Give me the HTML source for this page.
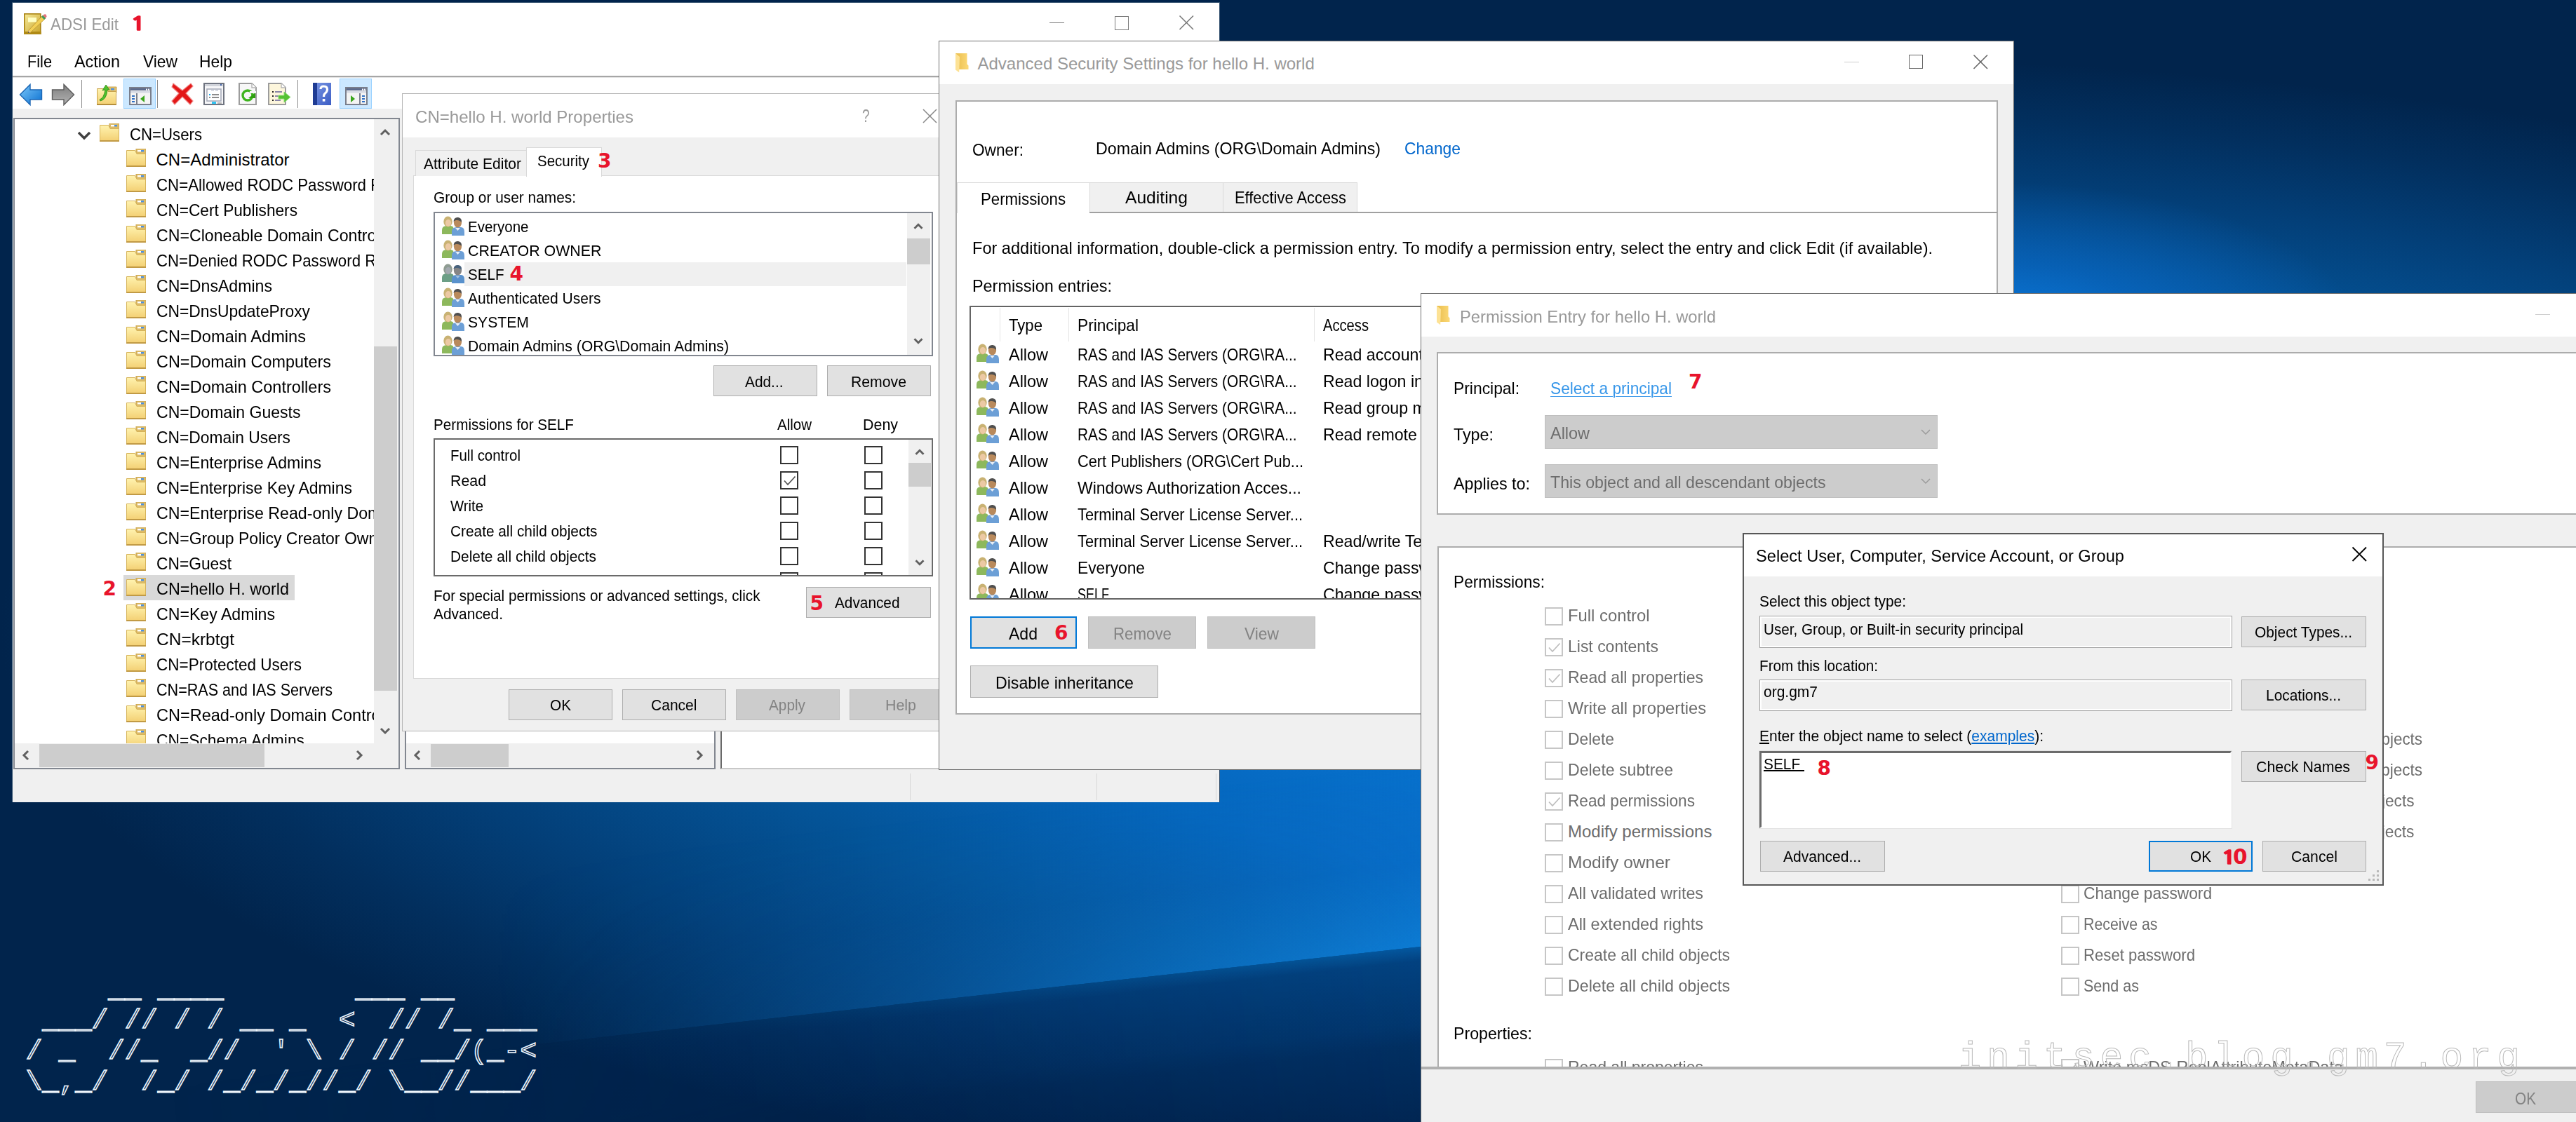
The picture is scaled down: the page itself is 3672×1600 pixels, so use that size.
<!DOCTYPE html>
<html><head><meta charset="utf-8"><title>ADSI Edit</title><style>
html,body{margin:0;padding:0;background:#021b3a}
body{width:3672px;height:1600px;position:relative;overflow:hidden;font-family:"Liberation Sans",sans-serif}
.b{position:absolute;box-sizing:border-box}
.c{position:absolute;left:0;top:0;width:3672px;height:1600px}
.t{position:absolute;line-height:1;white-space:pre;transform-origin:0 0}
.sg,.ar{font-family:"Liberation Sans",sans-serif}
.mono{font-family:"Liberation Mono",monospace}
.dj{font-family:"DejaVu Sans","Liberation Sans",sans-serif}
.nt{font-family:"NanumGothic","DejaVu Sans",sans-serif}
.bd{font-weight:bold}
svg{position:absolute;overflow:visible}
#bg{background:
 radial-gradient(ellipse 520px 210px at 2840px 470px,rgba(12,122,222,.95) 0,rgba(10,110,210,.55) 45%,rgba(10,100,200,0) 100%),
 radial-gradient(ellipse 2500px 820px at 2500px 900px,#0a80e0 0,#0874d2 25%,#0566bc 45%,#045498 62%,#033f78 78%,#022f5e 90%,#01244c 100%)}
#beamd{left:225px;top:1350px;width:2400px;height:800px;transform-origin:1800px 0;transform:rotate(-6.3deg);
 background:linear-gradient(to bottom,rgba(0,30,80,0) 0,rgba(0,30,80,.36) 20px,rgba(0,28,74,.4) 110px,rgba(0,26,68,.5) 140px,rgba(0,24,62,.5) 100%);
 -webkit-mask-image:linear-gradient(to right,transparent 0,rgba(0,0,0,.5) 35%,#000 75%);mask-image:linear-gradient(to right,transparent 0,rgba(0,0,0,.5) 35%,#000 75%)}
#beamu{left:225px;top:1090px;width:2400px;height:260px;transform-origin:1800px 260px;transform:rotate(-6.3deg);
 background:linear-gradient(to top,rgba(20,150,250,.6) 0,rgba(16,130,235,.25) 45%,rgba(16,130,235,0) 100%);
 -webkit-mask-image:linear-gradient(to right,transparent 20%,rgba(0,0,0,.35) 45%,#000 78%);mask-image:linear-gradient(to right,transparent 20%,rgba(0,0,0,.35) 45%,#000 78%)}
</style></head><body>
<svg width="0" height="0" style="position:absolute">
<defs>
<linearGradient id="gFold" x1="0" y1="0" x2="0" y2="1"><stop offset="0" stop-color="#fff3b0"/><stop offset="1" stop-color="#f3cf72"/></linearGradient>
<linearGradient id="gFoldB" x1="0" y1="0" x2="1" y2="0"><stop offset="0" stop-color="#e9bd4c"/><stop offset="1" stop-color="#fcd977"/></linearGradient>
<linearGradient id="gBack" x1="0" y1="0" x2="1" y2="1"><stop offset="0" stop-color="#7cc8fa"/><stop offset="1" stop-color="#0a6fd0"/></linearGradient>
<linearGradient id="gFwd" x1="0" y1="0" x2="0" y2="1"><stop offset="0" stop-color="#7d7d7d"/><stop offset="1" stop-color="#b4b4b4"/></linearGradient>
<linearGradient id="gNote" x1="0" y1="0" x2="1" y2="1"><stop offset="0" stop-color="#f6ea9a"/><stop offset="1" stop-color="#c9a42a"/></linearGradient>
<linearGradient id="gHelp" x1="0" y1="0" x2="1" y2="1"><stop offset="0" stop-color="#7c98e4"/><stop offset="1" stop-color="#3a5cc4"/></linearGradient>
<symbol id="folder" viewBox="0 0 28 26">
 <path d="M14 0H28V10H14Z" fill="#dcbb68" stroke="#c9a34e" stroke-width="1"/>
 <rect x="16" y="2" width="5" height="2.4" fill="#fff"/><rect x="21" y="2" width="4" height="2.4" fill="#4a90e2"/>
 <path d="M0.5 2.5H12.5L15 7.5H27.5V25.5H0.5Z" fill="url(#gFold)" stroke="#d6b35a" stroke-width="1"/>
 <rect x="0" y="24" width="28" height="2" fill="#c19a45"/>
</symbol>
<symbol id="users" viewBox="0 0 32 28">
 <path d="M0 26V20Q0 14 7 14H12Q17 14 17 20V26Z" fill="#8db85c"/>
 <ellipse cx="8.5" cy="8" rx="6.2" ry="7.5" fill="#c9b273"/>
 <ellipse cx="9" cy="10" rx="4.2" ry="5" fill="#ecc9a4"/>
 <path d="M14 28V22Q14 16 21 16H27Q32 16 32 23V28Z" fill="#6c9fd6"/>
 <ellipse cx="22.5" cy="9.5" rx="5.6" ry="7" fill="#b98a5c"/>
 <path d="M16.5 8Q17 1.5 23 2Q28.5 2.5 28 9Q25 5.5 20 6Q18 6.5 16.5 8Z" fill="#4f4f4f"/>
 <path d="M19 17L22.5 21L26 17Z" fill="#e8eef6"/>
</symbol>
<symbol id="userssil" viewBox="0 0 32 28">
 <path d="M0 26V20Q0 14 7 14H12Q17 14 17 20V26Z"/>
 <ellipse cx="8.5" cy="8" rx="6.2" ry="7.5"/>
 <path d="M14 28V22Q14 16 21 16H27Q32 16 32 23V28Z"/>
 <ellipse cx="22.5" cy="9.5" rx="5.6" ry="7"/>
 <path d="M16.5 8Q17 1.5 23 2Q28.5 2.5 28 9Q25 5.5 20 6Q18 6.5 16.5 8Z"/>
</symbol>
<symbol id="tfolder" viewBox="0 0 20 28">
 <path d="M0 0H16.5V15.5L18.5 17.5V23H4Z" fill="url(#gFoldB)"/>
 <path d="M0 0L6 5L5.2 27.2L0 23.5Z" fill="#fde295"/>
</symbol>
<symbol id="chk" viewBox="0 0 25 25">
 <path d="M5 12.5L10 18L20.5 6.5" fill="none" stroke-width="1.8"/>
</symbol>
</defs></svg>
<div class="b" id="bg" style="left:0;top:0;width:3672px;height:1600px"></div><div class="b" id="beamd"></div><div class="b" id="beamu"></div>
<span class="t mono" style="left:36.8px;top:1391.5px;font-size:39.15px;color:#0a2a52;-webkit-text-stroke:1.55px #edf4fb;letter-spacing:0;">     __ ____        ___ __</span>
<span class="t mono" style="left:36.8px;top:1435.7px;font-size:39.15px;color:#0a2a52;-webkit-text-stroke:1.55px #edf4fb;letter-spacing:0;"> ___/ // / / __ _  &lt;  // /_ ___</span>
<span class="t mono" style="left:36.8px;top:1479.9px;font-size:39.15px;color:#0a2a52;-webkit-text-stroke:1.55px #edf4fb;letter-spacing:0;">/ _  //_  _//  ' \ / // __/(_-&lt;</span>
<span class="t mono" style="left:36.8px;top:1524.1px;font-size:39.15px;color:#0a2a52;-webkit-text-stroke:1.55px #edf4fb;letter-spacing:0;">\_,_/  /_/ /_/_/_//_/ \__//___/</span>
<div class="c" style="clip-path:inset(3px 1933px 456px 17px);">
<div class="b" style="left:17px;top:3px;width:1722px;height:1141px;background:#fff;border:1px solid #32506e;"></div>
<svg style="left:34px;top:18.5px;" width="33" height="30" viewBox="0 0 33 30"><rect x="0.8" y="0.8" width="23" height="28.4" fill="url(#gNote)" stroke="#a8820f" stroke-width="1.6"/><rect x="0" y="26" width="24.6" height="4" fill="#b08a14"/><rect x="6" y="6" width="12" height="6.5" fill="#ffffc4"/><path d="M27 3L31 7L10 27L6 28L7 24Z" fill="#f2cf55" stroke="#b8902c" stroke-width="0.8"/><path d="M27 3L29 1.5Q31 0.5 32 2.5L32.5 4.5L31 7Z" fill="#e2737c"/><path d="M25 5L27 3L31 7L29 9Z" fill="#3f9a5e"/><path d="M6 28L7 24L10 27Z" fill="#e9c7a0"/><path d="M6 28L6.5 26L8 27.5Z" fill="#333"/></svg>
<span class="t sg" style="left:71.5px;top:22.7px;font-size:24px;color:#999;transform:scaleX(0.9323);">ADSI Edit</span>
<span class="t nt bd" style="left:185.5px;top:20.5px;font-size:26.5px;color:#e8142c;transform:scaleX(1.3500);-webkit-text-stroke:1.4px #e8142c;">1</span>
<div class="b" style="left:1496px;top:31.5px;width:21px;height:1.6px;background:#7a7a7a;"></div>
<div class="b" style="left:1588.5px;top:23px;width:20px;height:20px;border:1.6px solid #7a7a7a;"></div>
<svg style="left:0;top:0" width="1" height="1"><path d="M1681.5 22.5L1701 42M1701 22.5L1681.5 42" stroke="#7a7a7a" stroke-width="1.6" fill="none"/></svg>
<span class="t sg" style="left:39px;top:75.7px;font-size:24px;color:#000;transform:scaleX(0.9051);">File</span>
<span class="t sg" style="left:106px;top:75.7px;font-size:24px;color:#000;transform:scaleX(0.9745);">Action</span>
<span class="t sg" style="left:204px;top:75.7px;font-size:24px;color:#000;transform:scaleX(0.9497);">View</span>
<span class="t sg" style="left:284px;top:75.7px;font-size:24px;color:#000;transform:scaleX(0.9522);">Help</span>
<div class="b" style="left:18px;top:108px;width:1720px;height:2px;background:#a6a6a6;"></div>
<div class="b" style="left:18px;top:110px;width:1720px;height:1px;background:#e4e4e4;"></div>
<div class="b" style="left:176px;top:112px;width:46px;height:43px;background:#cce8ff;border:1px solid #99d1ff;"></div>
<div class="b" style="left:484px;top:112px;width:46px;height:43px;background:#cce8ff;border:1px solid #99d1ff;"></div>
<div class="b" style="left:115.5px;top:114px;width:1.4px;height:40px;background:#8d8d8d;"></div>
<div class="b" style="left:223.5px;top:114px;width:1.4px;height:40px;background:#8d8d8d;"></div>
<div class="b" style="left:423.5px;top:114px;width:1.4px;height:40px;background:#8d8d8d;"></div>
<svg style="left:28px;top:120px;" width="32" height="30" viewBox="0 0 32 30"><path d="M0.5 15L15 0.5V8H31.5V22H15V29.5Z" fill="url(#gBack)" stroke="#1b66b4" stroke-width="1.4"/></svg>
<svg style="left:74px;top:120px;" width="32" height="30" viewBox="0 0 32 30"><path d="M31.5 15L17 0.5V8H0.5V22H17V29.5Z" fill="url(#gFwd)" stroke="#5c5c5c" stroke-width="1.4"/></svg>
<svg style="left:138px;top:120px;" width="28" height="30" viewBox="0 0 28 30"><path d="M15 4H28V12H15Z" fill="#e2c06c" stroke="#c9a34e"/><rect x="20" y="6" width="5" height="2.4" fill="#4a90e2"/><path d="M0.5 6.5H13L16 10.5H27.5V29.5H0.5Z" fill="url(#gFold)" stroke="#c9a34e"/><rect x="0" y="28" width="28" height="2" fill="#b58f3c"/><path d="M4 22Q10 20 12 8L8 9L13 1L18 8L15 8Q14 22 5 24Z" fill="#4fc02c" stroke="#2e8a14" stroke-width="0.8"/></svg>
<svg style="left:184px;top:124px;" width="32" height="26" viewBox="0 0 32 26"><rect x="1" y="1" width="30" height="24" fill="#f4f4f4" stroke="#7a7f8c" stroke-width="2"/><rect x="2" y="2" width="28" height="3" fill="#5d6b8c"/><rect x="2" y="6" width="28" height="2.5" fill="#d5d9e4"/><rect x="24" y="2.6" width="2" height="2" fill="#fff"/><rect x="27" y="2.6" width="2" height="2" fill="#fff"/><rect x="10" y="9" width="2" height="15" fill="#7a7f8c"/><rect x="4" y="12" width="4" height="2" fill="#2e6fc4"/><rect x="4" y="16" width="4" height="2" fill="#2e6fc4"/><rect x="4" y="20" width="4" height="2" fill="#2e6fc4"/><path d="M22 12V22L16 17Z" fill="#3aa51c"/></svg>
<svg style="left:244px;top:118px;" width="32" height="32" viewBox="0 0 32 32"><path d="M3 1L16 11L28 1L31 5L21 15L31 26L27 31L16 20L5 31L1 26L11 15L1 6Z" fill="#e31818" stroke="#f08a8a" stroke-width="1.2"/></svg>
<svg style="left:290px;top:118px;" width="30" height="32" viewBox="0 0 30 32"><rect x="1" y="1" width="28" height="30" fill="#f6f6f8" stroke="#6f7480" stroke-width="2"/><rect x="2" y="2" width="26" height="3" fill="#d0d3da"/><rect x="24" y="2" width="2" height="2" fill="#4466aa"/><rect x="5" y="9" width="20" height="17" fill="#fff" stroke="#a8adbb" stroke-width="1.6"/><rect x="11" y="10" width="4" height="2" fill="#d8dbe4"/><rect x="17" y="10" width="4" height="2" fill="#d8dbe4"/><rect x="8" y="16" width="2" height="2" fill="#1aa8ee"/><rect x="12" y="16" width="10" height="2" fill="#8c8c8c"/><rect x="8" y="20" width="2" height="2" fill="#8c8c8c"/><rect x="12" y="20" width="10" height="2" fill="#8c8c8c"/><rect x="12" y="27" width="6" height="3" fill="#2ec4f4"/><rect x="20" y="28" width="6" height="2" fill="#b4b4b4"/></svg>
<svg style="left:340px;top:118px;" width="26" height="32" viewBox="0 0 26 32"><path d="M1 1H19L25 7V31H1Z" fill="#f7f7f7" stroke="#9c9c9c" stroke-width="2"/><path d="M19 1V7H25" fill="#fff" stroke="#b5b5b5" stroke-width="1.4"/><circle cx="13" cy="18" r="7" fill="none" stroke="#3fb41f" stroke-width="3.4"/><path d="M14 22H24V14Z" fill="#2fa010"/><rect x="16" y="12" width="9" height="3" fill="#f7f7f7"/></svg>
<svg style="left:382px;top:118px;" width="33" height="32" viewBox="0 0 33 32"><path d="M1 1H19L25 7V31H1Z" fill="#fdf6dc" stroke="#9c9c9c" stroke-width="2"/><path d="M19 1V7H25" fill="#fff" stroke="#b5b5b5" stroke-width="1.4"/><rect x="6" y="12" width="2" height="2" fill="#222"/><rect x="10" y="12" width="10" height="2" fill="#8a86a8"/><rect x="6" y="18" width="2" height="2" fill="#222"/><rect x="10" y="18" width="6" height="2" fill="#8a86a8"/><rect x="6" y="24" width="2" height="2" fill="#222"/><rect x="10" y="24" width="8" height="2" fill="#8a86a8"/><path d="M15 18H23V13L32 20.5L23 28V23H15Z" fill="#55c233" stroke="#8edb74" stroke-width="1"/></svg>
<svg style="left:446px;top:118px;" width="26" height="32" viewBox="0 0 26 32"><rect x="0" y="0" width="26" height="32" fill="url(#gHelp)"/><rect x="0" y="0" width="6" height="32" fill="#1f3c94"/><path d="M11 9Q11 5 15.5 5Q20.5 5 20.5 9.5Q20.5 12.5 17.5 15Q15.5 16.5 15.5 20" fill="none" stroke="#fff" stroke-width="3.2"/><rect x="13.8" y="23" width="3.6" height="3.6" fill="#fff"/></svg>
<svg style="left:492px;top:124px;" width="32" height="26" viewBox="0 0 32 26"><rect x="1" y="1" width="30" height="24" fill="#f4f4f4" stroke="#7a7f8c" stroke-width="2"/><rect x="2" y="2" width="28" height="3" fill="#5d6b8c"/><rect x="2" y="6" width="28" height="2.5" fill="#d5d9e4"/><rect x="24" y="2.6" width="2" height="2" fill="#fff"/><rect x="27" y="2.6" width="2" height="2" fill="#fff"/><rect x="20" y="9" width="2" height="15" fill="#7a7f8c"/><rect x="24" y="12" width="4" height="2" fill="#2e6fc4"/><rect x="24" y="16" width="4" height="2" fill="#2e6fc4"/><rect x="24" y="20" width="4" height="2" fill="#2e6fc4"/><path d="M8 12V22L14 17Z" fill="#3aa51c"/></svg>
<div class="b" style="left:18px;top:155px;width:1720px;height:990px;background:#f0f0f0;"></div>
<div class="b" style="left:19px;top:168px;width:551px;height:929px;background:#fff;border:2px solid #828790;"></div>
<div class="c" style="clip-path:inset(170px 3139px 540px 21px);">
<div class="b" style="left:176px;top:820px;width:244px;height:36px;background:#d9d9d9;"></div>
<svg style="left:0;top:0" width="1" height="1"><polyline points="112,189.0 120,197.0 128,189.0" fill="none" stroke="#404040" stroke-width="3.4"/></svg>
<svg style="left:142px;top:176px;" width="28" height="26"><use href="#folder"/></svg>
<span class="t sg" style="left:184.5px;top:180.2px;font-size:24px;color:#000;transform:scaleX(0.9249);">CN=Users</span>
<svg style="left:180px;top:212px;" width="28" height="26"><use href="#folder"/></svg>
<span class="t sg" style="left:222.5px;top:216.2px;font-size:24px;color:#000;">CN=Administrator</span>
<svg style="left:180px;top:248px;" width="28" height="26"><use href="#folder"/></svg>
<span class="t sg" style="left:222.5px;top:252.2px;font-size:24px;color:#000;transform:scaleX(0.9283);">CN=Allowed RODC Password Replication Group</span>
<svg style="left:180px;top:284px;" width="28" height="26"><use href="#folder"/></svg>
<span class="t sg" style="left:222.5px;top:288.2px;font-size:24px;color:#000;transform:scaleX(0.9448);">CN=Cert Publishers</span>
<svg style="left:180px;top:320px;" width="28" height="26"><use href="#folder"/></svg>
<span class="t sg" style="left:222.5px;top:324.2px;font-size:24px;color:#000;transform:scaleX(0.9649);">CN=Cloneable Domain Controllers</span>
<svg style="left:180px;top:356px;" width="28" height="26"><use href="#folder"/></svg>
<span class="t sg" style="left:222.5px;top:360.2px;font-size:24px;color:#000;transform:scaleX(0.9264);">CN=Denied RODC Password Replication Group</span>
<svg style="left:180px;top:392px;" width="28" height="26"><use href="#folder"/></svg>
<span class="t sg" style="left:222.5px;top:396.2px;font-size:24px;color:#000;transform:scaleX(0.9627);">CN=DnsAdmins</span>
<svg style="left:180px;top:428px;" width="28" height="26"><use href="#folder"/></svg>
<span class="t sg" style="left:222.5px;top:432.2px;font-size:24px;color:#000;transform:scaleX(0.9517);">CN=DnsUpdateProxy</span>
<svg style="left:180px;top:464px;" width="28" height="26"><use href="#folder"/></svg>
<span class="t sg" style="left:222.5px;top:468.2px;font-size:24px;color:#000;transform:scaleX(0.9827);">CN=Domain Admins</span>
<svg style="left:180px;top:500px;" width="28" height="26"><use href="#folder"/></svg>
<span class="t sg" style="left:222.5px;top:504.2px;font-size:24px;color:#000;transform:scaleX(0.9749);">CN=Domain Computers</span>
<svg style="left:180px;top:536px;" width="28" height="26"><use href="#folder"/></svg>
<span class="t sg" style="left:222.5px;top:540.2px;font-size:24px;color:#000;transform:scaleX(0.9800);">CN=Domain Controllers</span>
<svg style="left:180px;top:572px;" width="28" height="26"><use href="#folder"/></svg>
<span class="t sg" style="left:222.5px;top:576.2px;font-size:24px;color:#000;transform:scaleX(0.9599);">CN=Domain Guests</span>
<svg style="left:180px;top:608px;" width="28" height="26"><use href="#folder"/></svg>
<span class="t sg" style="left:222.5px;top:612.2px;font-size:24px;color:#000;transform:scaleX(0.9516);">CN=Domain Users</span>
<svg style="left:180px;top:644px;" width="28" height="26"><use href="#folder"/></svg>
<span class="t sg" style="left:222.5px;top:648.2px;font-size:24px;color:#000;transform:scaleX(0.9653);">CN=Enterprise Admins</span>
<svg style="left:180px;top:680px;" width="28" height="26"><use href="#folder"/></svg>
<span class="t sg" style="left:222.5px;top:684.2px;font-size:24px;color:#000;transform:scaleX(0.9572);">CN=Enterprise Key Admins</span>
<svg style="left:180px;top:716px;" width="28" height="26"><use href="#folder"/></svg>
<span class="t sg" style="left:222.5px;top:720.2px;font-size:24px;color:#000;transform:scaleX(0.9667);">CN=Enterprise Read-only Domain Controllers</span>
<svg style="left:180px;top:752px;" width="28" height="26"><use href="#folder"/></svg>
<span class="t sg" style="left:222.5px;top:756.2px;font-size:24px;color:#000;transform:scaleX(0.9587);">CN=Group Policy Creator Owners</span>
<svg style="left:180px;top:788px;" width="28" height="26"><use href="#folder"/></svg>
<span class="t sg" style="left:222.5px;top:792.2px;font-size:24px;color:#000;transform:scaleX(0.9493);">CN=Guest</span>
<svg style="left:180px;top:824px;" width="28" height="26"><use href="#folder"/></svg>
<span class="t sg" style="left:222.5px;top:828.2px;font-size:24px;color:#000;transform:scaleX(0.9738);">CN=hello H. world</span>
<svg style="left:180px;top:860px;" width="28" height="26"><use href="#folder"/></svg>
<span class="t sg" style="left:222.5px;top:864.2px;font-size:24px;color:#000;transform:scaleX(0.9635);">CN=Key Admins</span>
<svg style="left:180px;top:896px;" width="28" height="26"><use href="#folder"/></svg>
<span class="t sg" style="left:222.5px;top:900.2px;font-size:24px;color:#000;transform:scaleX(1.0211);">CN=krbtgt</span>
<svg style="left:180px;top:932px;" width="28" height="26"><use href="#folder"/></svg>
<span class="t sg" style="left:222.5px;top:936.2px;font-size:24px;color:#000;transform:scaleX(0.9377);">CN=Protected Users</span>
<svg style="left:180px;top:968px;" width="28" height="26"><use href="#folder"/></svg>
<span class="t sg" style="left:222.5px;top:972.2px;font-size:24px;color:#000;transform:scaleX(0.8982);">CN=RAS and IAS Servers</span>
<svg style="left:180px;top:1004px;" width="28" height="26"><use href="#folder"/></svg>
<span class="t sg" style="left:222.5px;top:1008.2px;font-size:24px;color:#000;transform:scaleX(0.9800);">CN=Read-only Domain Controllers</span>
<svg style="left:180px;top:1040px;" width="28" height="26"><use href="#folder"/></svg>
<span class="t sg" style="left:222.5px;top:1044.2px;font-size:24px;color:#000;transform:scaleX(0.9500);">CN=Schema Admins</span>
<span class="t dj bd" style="left:146.5px;top:826.0px;font-size:28px;color:#e8142c;">2</span>
</div>
<div class="b" style="left:533px;top:170px;width:34px;height:890px;background:#f0f0f0;"></div>
<div class="b" style="left:533px;top:494px;width:33px;height:491px;background:#cdcdcd;"></div>
<svg style="left:0;top:0" width="1" height="1"><polyline points="543,192.0 549,186.0 555,192.0" fill="none" stroke="#606060" stroke-width="3"/></svg>
<svg style="left:0;top:0" width="1" height="1"><polyline points="543,1039.0 549,1045.0 555,1039.0" fill="none" stroke="#606060" stroke-width="3"/></svg>
<div class="b" style="left:21px;top:1060px;width:546px;height:35px;background:#f0f0f0;"></div>
<div class="b" style="left:56px;top:1061px;width:321px;height:33px;background:#cdcdcd;"></div>
<svg style="left:0;top:0" width="1" height="1"><polyline points="40.0,1071 34.0,1077 40.0,1083" fill="none" stroke="#606060" stroke-width="3"/></svg>
<svg style="left:0;top:0" width="1" height="1"><polyline points="509.0,1071 515.0,1077 509.0,1083" fill="none" stroke="#606060" stroke-width="3"/></svg>
<div class="b" style="left:577px;top:168px;width:443px;height:929px;background:#fff;border:2px solid #828790;"></div>
<div class="b" style="left:579px;top:1060px;width:439px;height:35px;background:#f0f0f0;"></div>
<div class="b" style="left:614px;top:1061px;width:111px;height:33px;background:#cdcdcd;"></div>
<svg style="left:0;top:0" width="1" height="1"><polyline points="598.0,1071 592.0,1077 598.0,1083" fill="none" stroke="#606060" stroke-width="3"/></svg>
<svg style="left:0;top:0" width="1" height="1"><polyline points="994.0,1071 1000.0,1077 994.0,1083" fill="none" stroke="#606060" stroke-width="3"/></svg>
<div class="b" style="left:1027px;top:168px;width:720px;height:929px;background:#fff;border:2px solid #c8c8c8;border-left:2.5px solid #696969;border-top:2px solid #828790;"></div>
<div class="b" style="left:1297px;top:1103px;width:1px;height:38px;background:#d7d7d7;"></div>
<div class="b" style="left:1563px;top:1103px;width:1px;height:38px;background:#d7d7d7;"></div>
<div class="b" style="left:1733px;top:1103px;width:1px;height:38px;background:#d7d7d7;"></div>
</div>
<div class="c" style="clip-path:inset(133px 2252px 557px 573px);">
<div class="b" style="left:573px;top:133px;width:860px;height:910px;background:#f0f0f0;border:1px solid #b4b4b4;"></div>
<div class="b" style="left:574px;top:134px;width:858px;height:62px;background:#fff;"></div>
<span class="t sg" style="left:592px;top:154.7px;font-size:24px;color:#999;transform:scaleX(1.0028);">CN=hello H. world Properties</span>
<span class="t sg" style="left:1228.5px;top:152.0px;font-size:26px;color:#999;transform:scaleX(0.7257);">?</span>
<svg style="left:0;top:0" width="1" height="1"><path d="M1316 156L1335 175M1335 156L1316 175" stroke="#8a8a8a" stroke-width="1.6" fill="none"/></svg>
<div class="b" style="left:589px;top:250px;width:850px;height:718px;background:#fff;border:1px solid #d9d9d9;"></div>
<div class="b" style="left:592px;top:214px;width:159px;height:37px;background:#f0f0f0;border:1px solid #d9d9d9;border-bottom:none;"></div>
<div class="b" style="left:750px;top:210px;width:108px;height:42px;background:#fff;border:1px solid #d9d9d9;border-bottom:none;"></div>
<span class="t ar" style="left:604px;top:223.4px;font-size:22px;color:#000;transform:scaleX(0.9552);">Attribute Editor</span>
<span class="t ar" style="left:766px;top:219.4px;font-size:22px;color:#000;transform:scaleX(0.9310);">Security</span>
<span class="t dj bd" style="left:852px;top:215.5px;font-size:28px;color:#e8142c;">3</span>
<span class="t ar" style="left:618px;top:270.9px;font-size:22px;color:#000;transform:scaleX(0.9487);">Group or user names:</span>
<div class="b" style="left:618px;top:302px;width:712px;height:206px;background:#fff;border:2px solid #828790;"></div>
<div class="b" style="left:662px;top:374px;width:630px;height:34px;background:#f0f0f0;"></div>
<svg style="left:630px;top:308px;" width="32" height="28"><use href="#users"/></svg>
<span class="t ar" style="left:666.5px;top:312.9px;font-size:22px;color:#000;transform:scaleX(0.9306);">Everyone</span>
<svg style="left:630px;top:342px;" width="32" height="28"><use href="#users"/></svg>
<span class="t ar" style="left:666.5px;top:346.9px;font-size:22px;color:#000;transform:scaleX(0.9720);">CREATOR OWNER</span>
<svg style="left:630px;top:376px;" width="32" height="28"><use href="#users"/></svg>
<svg style="left:630px;top:376px;fill:#3f7fc0;opacity:.42" width="32" height="28"><use href="#userssil"/></svg>
<span class="t ar" style="left:666.5px;top:380.9px;font-size:22px;color:#000;transform:scaleX(0.9358);">SELF</span>
<svg style="left:630px;top:410px;" width="32" height="28"><use href="#users"/></svg>
<span class="t ar" style="left:666.5px;top:414.9px;font-size:22px;color:#000;transform:scaleX(0.9565);">Authenticated Users</span>
<svg style="left:630px;top:444px;" width="32" height="28"><use href="#users"/></svg>
<span class="t ar" style="left:666.5px;top:448.9px;font-size:22px;color:#000;transform:scaleX(0.9617);">SYSTEM</span>
<svg style="left:630px;top:478px;" width="32" height="28"><use href="#users"/></svg>
<span class="t ar" style="left:666.5px;top:482.9px;font-size:22px;color:#000;transform:scaleX(0.9659);">Domain Admins (ORG\Domain Admins)</span>
<span class="t dj bd" style="left:726.5px;top:377.0px;font-size:28px;color:#e8142c;">4</span>
<div class="b" style="left:1293px;top:304px;width:33px;height:202px;background:#f0f0f0;"></div>
<div class="b" style="left:1293px;top:340px;width:33px;height:37px;background:#cdcdcd;"></div>
<svg style="left:0;top:0" width="1" height="1"><polyline points="1303.5,325.75 1309,320.25 1314.5,325.75" fill="none" stroke="#606060" stroke-width="2.8"/></svg>
<svg style="left:0;top:0" width="1" height="1"><polyline points="1303.5,483.25 1309,488.75 1314.5,483.25" fill="none" stroke="#606060" stroke-width="2.8"/></svg>
<div class="b" style="left:1017px;top:521px;width:148px;height:44px;background:#e1e1e1;border:1px solid #adadad;"></div>
<span class="t ar" style="left:1062px;top:534.4px;font-size:22px;color:#000;transform:scaleX(0.9481);">Add...</span>
<div class="b" style="left:1179px;top:521px;width:148px;height:44px;background:#e1e1e1;border:1px solid #adadad;"></div>
<span class="t ar" style="left:1213px;top:534.4px;font-size:22px;color:#000;transform:scaleX(0.9643);">Remove</span>
<span class="t ar" style="left:618px;top:595.4px;font-size:22px;color:#000;transform:scaleX(0.9401);">Permissions for SELF</span>
<span class="t ar" style="left:1108px;top:595.4px;font-size:22px;color:#000;transform:scaleX(0.9319);">Allow</span>
<span class="t ar" style="left:1230px;top:595.4px;font-size:22px;color:#000;transform:scaleX(0.9735);">Deny</span>
<div class="b" style="left:618px;top:625px;width:712px;height:197px;background:#fff;border:2px solid #6a6a6a;"></div>
<div class="c" style="clip-path:inset(627px 2344px 780px 620px);">
<span class="t ar" style="left:642px;top:639.4px;font-size:22px;color:#000;transform:scaleX(0.9294);">Full control</span>
<div class="b" style="left:1112px;top:636px;width:26px;height:26px;background:#fff;border:2px solid #333;"></div>
<div class="b" style="left:1232px;top:636px;width:26px;height:26px;background:#fff;border:2px solid #333;"></div>
<span class="t ar" style="left:642px;top:675.4px;font-size:22px;color:#000;transform:scaleX(0.9697);">Read</span>
<div class="b" style="left:1112px;top:672px;width:26px;height:26px;background:#fff;border:2px solid #333;"></div>
<svg style="left:1112.5px;top:672.5px;stroke:#555" width="25" height="25"><use href="#chk"/></svg>
<div class="b" style="left:1232px;top:672px;width:26px;height:26px;background:#fff;border:2px solid #333;"></div>
<span class="t ar" style="left:642px;top:711.4px;font-size:22px;color:#000;transform:scaleX(0.9227);">Write</span>
<div class="b" style="left:1112px;top:708px;width:26px;height:26px;background:#fff;border:2px solid #333;"></div>
<div class="b" style="left:1232px;top:708px;width:26px;height:26px;background:#fff;border:2px solid #333;"></div>
<span class="t ar" style="left:642px;top:747.4px;font-size:22px;color:#000;transform:scaleX(0.9465);">Create all child objects</span>
<div class="b" style="left:1112px;top:744px;width:26px;height:26px;background:#fff;border:2px solid #333;"></div>
<div class="b" style="left:1232px;top:744px;width:26px;height:26px;background:#fff;border:2px solid #333;"></div>
<span class="t ar" style="left:642px;top:783.4px;font-size:22px;color:#000;transform:scaleX(0.9502);">Delete all child objects</span>
<div class="b" style="left:1112px;top:780px;width:26px;height:26px;background:#fff;border:2px solid #333;"></div>
<div class="b" style="left:1232px;top:780px;width:26px;height:26px;background:#fff;border:2px solid #333;"></div>
<span class="t ar" style="left:642px;top:819.4px;font-size:22px;color:#000;transform:scaleX(0.9550);">Read all properties</span>
<div class="b" style="left:1112px;top:816px;width:26px;height:26px;background:#fff;border:2px solid #333;"></div>
<div class="b" style="left:1232px;top:816px;width:26px;height:26px;background:#fff;border:2px solid #333;"></div>
<div class="b" style="left:1295px;top:627px;width:32px;height:193px;background:#f0f0f0;"></div>
<div class="b" style="left:1295px;top:660px;width:32px;height:34px;background:#cdcdcd;"></div>
<svg style="left:0;top:0" width="1" height="1"><polyline points="1305.5,647.75 1311,642.25 1316.5,647.75" fill="none" stroke="#606060" stroke-width="2.8"/></svg>
<svg style="left:0;top:0" width="1" height="1"><polyline points="1305.5,799.25 1311,804.75 1316.5,799.25" fill="none" stroke="#606060" stroke-width="2.8"/></svg>
</div>
<span class="t ar" style="left:618px;top:839.4px;font-size:22px;color:#000;transform:scaleX(0.9400);">For special permissions or advanced settings, click</span>
<span class="t ar" style="left:618px;top:865.4px;font-size:22px;color:#000;transform:scaleX(0.9522);">Advanced.</span>
<div class="b" style="left:1149px;top:837px;width:178px;height:44px;background:#e1e1e1;border:1px solid #adadad;"></div>
<span class="t ar" style="left:1190px;top:848.9px;font-size:22px;color:#000;transform:scaleX(0.9452);">Advanced</span>
<span class="t dj bd" style="left:1154.5px;top:847.0px;font-size:28px;color:#e8142c;">5</span>
<div class="b" style="left:725px;top:983px;width:148px;height:44px;background:#e1e1e1;border:1px solid #adadad;"></div>
<span class="t ar" style="left:784px;top:994.9px;font-size:22px;color:#000;transform:scaleX(0.9435);">OK</span>
<div class="b" style="left:887px;top:983px;width:148px;height:44px;background:#e1e1e1;border:1px solid #adadad;"></div>
<span class="t ar" style="left:928px;top:994.9px;font-size:22px;color:#000;transform:scaleX(0.9564);">Cancel</span>
<div class="b" style="left:1049px;top:983px;width:148px;height:44px;background:#cccccc;border:1px solid #bfbfbf;"></div>
<span class="t ar" style="left:1096px;top:994.9px;font-size:22px;color:#838383;transform:scaleX(0.9446);">Apply</span>
<div class="b" style="left:1211px;top:983px;width:148px;height:44px;background:#cccccc;border:1px solid #bfbfbf;"></div>
<span class="t ar" style="left:1262px;top:994.9px;font-size:22px;color:#838383;transform:scaleX(0.9724);">Help</span>
</div>
<div class="c" style="clip-path:inset(58px 801px 502px 1338px);">
<div class="b" style="left:1338px;top:58px;width:1533px;height:1040px;background:#f0f0f0;border:1px solid #6e6e6e;"></div>
<div class="b" style="left:1339px;top:59px;width:1531px;height:61px;background:#fff;"></div>
<svg style="left:1362px;top:76px;" width="20" height="28"><use href="#tfolder"/></svg>
<span class="t sg" style="left:1393.5px;top:79.3px;font-size:24px;color:#999;">Advanced Security Settings for hello H. world</span>
<div class="b" style="left:2629px;top:87.5px;width:21px;height:1.6px;background:#cfcfcf;"></div>
<div class="b" style="left:2720.5px;top:78px;width:20px;height:20px;border:1.6px solid #666;"></div>
<svg style="left:0;top:0" width="1" height="1"><path d="M2813.5 78.5L2833 98M2833 78.5L2813.5 98" stroke="#666" stroke-width="1.6" fill="none"/></svg>
<div class="b" style="left:1362px;top:143px;width:1486px;height:876px;background:#fff;border:2px solid #acacac;"></div>
<span class="t sg" style="left:1386px;top:201.7px;font-size:24px;color:#000;transform:scaleX(0.9436);">Owner:</span>
<span class="t sg" style="left:1562px;top:199.7px;font-size:24px;color:#000;transform:scaleX(0.9663);">Domain Admins (ORG\Domain Admins)</span>
<span class="t sg" style="left:2002px;top:199.7px;font-size:24px;color:#0066cc;transform:scaleX(0.9515);">Change</span>
<div class="b" style="left:1553px;top:302px;width:1294px;height:2px;background:#a0a0a0;"></div>
<div class="b" style="left:1553px;top:260px;width:191px;height:42px;background:#f0f0f0;border:1px solid #d9d9d9;border-bottom:none;"></div>
<div class="b" style="left:1743px;top:260px;width:192px;height:42px;background:#f0f0f0;border:1px solid #d9d9d9;border-bottom:none;"></div>
<div class="b" style="left:1364px;top:260px;width:189px;height:44px;background:#fff;border:1px solid #d9d9d9;border-bottom:none;border-right:none;"></div>
<span class="t sg" style="left:1398px;top:271.7px;font-size:24px;color:#000;transform:scaleX(0.9258);">Permissions</span>
<span class="t sg" style="left:1604px;top:269.7px;font-size:24px;color:#000;transform:scaleX(1.0261);">Auditing</span>
<span class="t sg" style="left:1760px;top:269.7px;font-size:24px;color:#000;transform:scaleX(0.9122);">Effective Access</span>
<span class="t sg" style="left:1386px;top:341.7px;font-size:24px;color:#000;transform:scaleX(0.9812);">For additional information, double-click a permission entry. To modify a permission entry, select the entry and click Edit (if available).</span>
<span class="t sg" style="left:1386px;top:395.7px;font-size:24px;color:#000;transform:scaleX(0.9751);">Permission entries:</span>
<div class="b" style="left:1382px;top:436px;width:1001px;height:419px;background:#fff;border:2px solid #646464;"></div>
<div class="c" style="clip-path:inset(439px 1272px 747px 1385px);">
<div class="b" style="left:1425px;top:439px;width:1px;height:48px;background:#e5e5e5;"></div>
<div class="b" style="left:1523px;top:439px;width:1px;height:48px;background:#e5e5e5;"></div>
<div class="b" style="left:1873px;top:439px;width:1px;height:48px;background:#e5e5e5;"></div>
<span class="t sg" style="left:1438px;top:451.7px;font-size:24px;color:#000;transform:scaleX(0.9225);">Type</span>
<span class="t sg" style="left:1536px;top:451.7px;font-size:24px;color:#000;transform:scaleX(0.9452);">Principal</span>
<span class="t sg" style="left:1886px;top:451.7px;font-size:24px;color:#000;transform:scaleX(0.8402);">Access</span>
<svg style="left:1392px;top:490px;" width="32" height="28"><use href="#users"/></svg>
<span class="t sg" style="left:1438px;top:493.7px;font-size:24px;color:#000;transform:scaleX(0.9763);">Allow</span>
<span class="t sg" style="left:1536px;top:493.7px;font-size:24px;color:#000;transform:scaleX(0.8678);">RAS and IAS Servers (ORG\RA...</span>
<span class="t sg" style="left:1886px;top:493.7px;font-size:24px;color:#000;transform:scaleX(0.9650);">Read account restrictions</span>
<svg style="left:1392px;top:528px;" width="32" height="28"><use href="#users"/></svg>
<span class="t sg" style="left:1438px;top:531.7px;font-size:24px;color:#000;transform:scaleX(0.9763);">Allow</span>
<span class="t sg" style="left:1536px;top:531.7px;font-size:24px;color:#000;transform:scaleX(0.8678);">RAS and IAS Servers (ORG\RA...</span>
<span class="t sg" style="left:1886px;top:531.7px;font-size:24px;color:#000;transform:scaleX(0.9650);">Read logon information</span>
<svg style="left:1392px;top:566px;" width="32" height="28"><use href="#users"/></svg>
<span class="t sg" style="left:1438px;top:569.7px;font-size:24px;color:#000;transform:scaleX(0.9763);">Allow</span>
<span class="t sg" style="left:1536px;top:569.7px;font-size:24px;color:#000;transform:scaleX(0.8678);">RAS and IAS Servers (ORG\RA...</span>
<span class="t sg" style="left:1886px;top:569.7px;font-size:24px;color:#000;transform:scaleX(0.9650);">Read group membership</span>
<svg style="left:1392px;top:604px;" width="32" height="28"><use href="#users"/></svg>
<span class="t sg" style="left:1438px;top:607.7px;font-size:24px;color:#000;transform:scaleX(0.9763);">Allow</span>
<span class="t sg" style="left:1536px;top:607.7px;font-size:24px;color:#000;transform:scaleX(0.8678);">RAS and IAS Servers (ORG\RA...</span>
<span class="t sg" style="left:1886px;top:607.7px;font-size:24px;color:#000;transform:scaleX(0.9650);">Read remote access information</span>
<svg style="left:1392px;top:642px;" width="32" height="28"><use href="#users"/></svg>
<span class="t sg" style="left:1438px;top:645.7px;font-size:24px;color:#000;transform:scaleX(0.9763);">Allow</span>
<span class="t sg" style="left:1536px;top:645.7px;font-size:24px;color:#000;transform:scaleX(0.9076);">Cert Publishers (ORG\Cert Pub...</span>
<svg style="left:1392px;top:680px;" width="32" height="28"><use href="#users"/></svg>
<span class="t sg" style="left:1438px;top:683.7px;font-size:24px;color:#000;transform:scaleX(0.9763);">Allow</span>
<span class="t sg" style="left:1536px;top:683.7px;font-size:24px;color:#000;transform:scaleX(0.9565);">Windows Authorization Acces...</span>
<svg style="left:1392px;top:718px;" width="32" height="28"><use href="#users"/></svg>
<span class="t sg" style="left:1438px;top:721.7px;font-size:24px;color:#000;transform:scaleX(0.9763);">Allow</span>
<span class="t sg" style="left:1536px;top:721.7px;font-size:24px;color:#000;transform:scaleX(0.9081);">Terminal Server License Server...</span>
<svg style="left:1392px;top:756px;" width="32" height="28"><use href="#users"/></svg>
<span class="t sg" style="left:1438px;top:759.7px;font-size:24px;color:#000;transform:scaleX(0.9763);">Allow</span>
<span class="t sg" style="left:1536px;top:759.7px;font-size:24px;color:#000;transform:scaleX(0.9081);">Terminal Server License Server...</span>
<span class="t sg" style="left:1886px;top:759.7px;font-size:24px;color:#000;transform:scaleX(0.9650);">Read/write Terminal Server license server</span>
<svg style="left:1392px;top:794px;" width="32" height="28"><use href="#users"/></svg>
<span class="t sg" style="left:1438px;top:797.7px;font-size:24px;color:#000;transform:scaleX(0.9763);">Allow</span>
<span class="t sg" style="left:1536px;top:797.7px;font-size:24px;color:#000;transform:scaleX(0.9468);">Everyone</span>
<span class="t sg" style="left:1886px;top:797.7px;font-size:24px;color:#000;transform:scaleX(0.9650);">Change password</span>
<svg style="left:1392px;top:832px;" width="32" height="28"><use href="#users"/></svg>
<span class="t sg" style="left:1438px;top:835.7px;font-size:24px;color:#000;transform:scaleX(0.9763);">Allow</span>
<span class="t sg" style="left:1536px;top:835.7px;font-size:24px;color:#000;transform:scaleX(0.7496);">SELF</span>
<span class="t sg" style="left:1886px;top:835.7px;font-size:24px;color:#000;transform:scaleX(0.9650);">Change password</span>
</div>
<div class="b" style="left:1383px;top:879px;width:152px;height:46px;background:#e1e1e1;border:2px solid #0078d7;"></div>
<span class="t sg" style="left:1438px;top:891.7px;font-size:24px;color:#000;transform:scaleX(0.9601);">Add</span>
<span class="t dj bd" style="left:1503px;top:888.5px;font-size:28px;color:#e8142c;">6</span>
<div class="b" style="left:1551px;top:879px;width:154px;height:46px;background:#cccccc;border:1px solid #bfbfbf;"></div>
<span class="t sg" style="left:1587px;top:891.7px;font-size:24px;color:#838383;transform:scaleX(0.9287);">Remove</span>
<div class="b" style="left:1721px;top:879px;width:154px;height:46px;background:#cccccc;border:1px solid #bfbfbf;"></div>
<span class="t sg" style="left:1774px;top:891.7px;font-size:24px;color:#838383;transform:scaleX(0.9497);">View</span>
<div class="b" style="left:1383px;top:949px;width:268px;height:46px;background:#e1e1e1;border:1px solid #adadad;"></div>
<span class="t sg" style="left:1419px;top:961.7px;font-size:24px;color:#000;transform:scaleX(0.9651);">Disable inheritance</span>
</div>
<div class="c" style="clip-path:inset(418px 0px 0px 2025px);">
<div class="b" style="left:2025px;top:418px;width:1700px;height:1300px;background:#f0f0f0;border:1px solid #6e6e6e;"></div>
<div class="b" style="left:2026px;top:419px;width:1700px;height:61px;background:#fff;"></div>
<svg style="left:2048px;top:436px;" width="20" height="28"><use href="#tfolder"/></svg>
<span class="t sg" style="left:2080.5px;top:439.7px;font-size:24px;color:#999;transform:scaleX(0.9915);">Permission Entry for hello H. world</span>
<div class="b" style="left:3614px;top:447.5px;width:21px;height:1.6px;background:#cfcfcf;"></div>
<div class="b" style="left:2048px;top:502px;width:1700px;height:232px;background:#fff;border:2px solid #acacac;"></div>
<span class="t sg" style="left:2072px;top:541.7px;font-size:24px;color:#000;transform:scaleX(0.9522);">Principal:</span>
<span class="t sg" style="left:2210px;top:541.7px;font-size:24px;color:#3897e9;transform:scaleX(0.9466);text-decoration:underline;text-decoration-thickness:1.2px;text-underline-offset:3px;">Select a principal</span>
<span class="t dj bd" style="left:2407px;top:530.5px;font-size:28px;color:#e8142c;">7</span>
<span class="t sg" style="left:2072px;top:607.7px;font-size:24px;color:#000;transform:scaleX(0.9710);">Type:</span>
<div class="b" style="left:2202px;top:592px;width:560px;height:48px;background:#cccccc;border:1px solid #bfbfbf;"></div>
<span class="t sg" style="left:2210px;top:605.7px;font-size:24px;color:#6d6d6d;transform:scaleX(0.9763);">Allow</span>
<svg style="left:0;top:0" width="1" height="1"><polyline points="2739,613.0 2745,619.0 2751,613.0" fill="none" stroke="#9a9a9a" stroke-width="1.5"/></svg>
<span class="t sg" style="left:2072px;top:677.7px;font-size:24px;color:#000;transform:scaleX(0.9725);">Applies to:</span>
<div class="b" style="left:2202px;top:662px;width:560px;height:48px;background:#cccccc;border:1px solid #bfbfbf;"></div>
<span class="t sg" style="left:2210px;top:675.7px;font-size:24px;color:#6d6d6d;transform:scaleX(0.9646);">This object and all descendant objects</span>
<svg style="left:0;top:0" width="1" height="1"><polyline points="2739,683.0 2745,689.0 2751,683.0" fill="none" stroke="#9a9a9a" stroke-width="1.5"/></svg>
<div class="b" style="left:2049px;top:779px;width:1700px;height:800px;background:#fff;border:2px solid #acacac;"></div>
<div class="c" style="clip-path:inset(781px 0px 79px 2051px);">
<span class="t sg" style="left:2072px;top:817.7px;font-size:24px;color:#000;transform:scaleX(0.9463);">Permissions:</span>
<div class="b" style="left:2202px;top:866px;width:26px;height:26px;background:#fff;border:2px solid #c6c6c6;"></div>
<span class="t sg" style="left:2235px;top:865.7px;font-size:24px;color:#6d6d6d;transform:scaleX(0.9925);">Full control</span>
<div class="b" style="left:2202px;top:910px;width:26px;height:26px;background:#fff;border:2px solid #c6c6c6;"></div>
<svg style="left:2202.5px;top:910.5px;stroke:#bebebe" width="25" height="25"><use href="#chk"/></svg>
<span class="t sg" style="left:2235px;top:909.7px;font-size:24px;color:#6d6d6d;transform:scaleX(0.9573);">List contents</span>
<div class="b" style="left:2202px;top:954px;width:26px;height:26px;background:#fff;border:2px solid #c6c6c6;"></div>
<svg style="left:2202.5px;top:954.5px;stroke:#bebebe" width="25" height="25"><use href="#chk"/></svg>
<span class="t sg" style="left:2235px;top:953.7px;font-size:24px;color:#6d6d6d;transform:scaleX(0.9580);">Read all properties</span>
<div class="b" style="left:2202px;top:998px;width:26px;height:26px;background:#fff;border:2px solid #c6c6c6;"></div>
<span class="t sg" style="left:2235px;top:997.7px;font-size:24px;color:#6d6d6d;transform:scaleX(0.9868);">Write all properties</span>
<div class="b" style="left:2202px;top:1042px;width:26px;height:26px;background:#fff;border:2px solid #c6c6c6;"></div>
<span class="t sg" style="left:2235px;top:1041.7px;font-size:24px;color:#6d6d6d;transform:scaleX(0.9514);">Delete</span>
<div class="b" style="left:2202px;top:1086px;width:26px;height:26px;background:#fff;border:2px solid #c6c6c6;"></div>
<span class="t sg" style="left:2235px;top:1085.7px;font-size:24px;color:#6d6d6d;transform:scaleX(0.9610);">Delete subtree</span>
<div class="b" style="left:2202px;top:1130px;width:26px;height:26px;background:#fff;border:2px solid #c6c6c6;"></div>
<svg style="left:2202.5px;top:1130.5px;stroke:#bebebe" width="25" height="25"><use href="#chk"/></svg>
<span class="t sg" style="left:2235px;top:1129.7px;font-size:24px;color:#6d6d6d;transform:scaleX(0.9422);">Read permissions</span>
<div class="b" style="left:2202px;top:1174px;width:26px;height:26px;background:#fff;border:2px solid #c6c6c6;"></div>
<span class="t sg" style="left:2235px;top:1173.7px;font-size:24px;color:#6d6d6d;">Modify permissions</span>
<div class="b" style="left:2202px;top:1218px;width:26px;height:26px;background:#fff;border:2px solid #c6c6c6;"></div>
<span class="t sg" style="left:2235px;top:1217.7px;font-size:24px;color:#6d6d6d;transform:scaleX(1.0229);">Modify owner</span>
<div class="b" style="left:2202px;top:1262px;width:26px;height:26px;background:#fff;border:2px solid #c6c6c6;"></div>
<span class="t sg" style="left:2235px;top:1261.7px;font-size:24px;color:#6d6d6d;transform:scaleX(0.9711);">All validated writes</span>
<div class="b" style="left:2202px;top:1306px;width:26px;height:26px;background:#fff;border:2px solid #c6c6c6;"></div>
<span class="t sg" style="left:2235px;top:1305.7px;font-size:24px;color:#6d6d6d;transform:scaleX(0.9774);">All extended rights</span>
<div class="b" style="left:2202px;top:1350px;width:26px;height:26px;background:#fff;border:2px solid #c6c6c6;"></div>
<span class="t sg" style="left:2235px;top:1349.7px;font-size:24px;color:#6d6d6d;transform:scaleX(0.9567);">Create all child objects</span>
<div class="b" style="left:2202px;top:1394px;width:26px;height:26px;background:#fff;border:2px solid #c6c6c6;"></div>
<span class="t sg" style="left:2235px;top:1393.7px;font-size:24px;color:#6d6d6d;transform:scaleX(0.9673);">Delete all child objects</span>
<div class="b" style="left:2938px;top:1042px;width:26px;height:26px;background:#fff;border:2px solid #c6c6c6;"></div>
<span class="t sg" style="left:2970px;top:1041.7px;font-size:24px;color:#6d6d6d;transform:scaleX(0.9332);">Create msDS-ShadowPrincipalContainer objects</span>
<div class="b" style="left:2938px;top:1086px;width:26px;height:26px;background:#fff;border:2px solid #c6c6c6;"></div>
<span class="t sg" style="left:2970px;top:1085.7px;font-size:24px;color:#6d6d6d;transform:scaleX(0.9380);">Delete msDS-ShadowPrincipalContainer objects</span>
<div class="b" style="left:2938px;top:1130px;width:26px;height:26px;background:#fff;border:2px solid #c6c6c6;"></div>
<span class="t sg" style="left:2970px;top:1129.7px;font-size:24px;color:#6d6d6d;transform:scaleX(0.9434);">Create ms-net-ieee-80211-GroupPolicy objects</span>
<div class="b" style="left:2938px;top:1174px;width:26px;height:26px;background:#fff;border:2px solid #c6c6c6;"></div>
<span class="t sg" style="left:2970px;top:1173.7px;font-size:24px;color:#6d6d6d;transform:scaleX(0.9484);">Delete ms-net-ieee-80211-GroupPolicy objects</span>
<div class="b" style="left:2938px;top:1262px;width:26px;height:26px;background:#fff;border:2px solid #c6c6c6;"></div>
<span class="t sg" style="left:2970px;top:1261.7px;font-size:24px;color:#6d6d6d;transform:scaleX(0.9460);">Change password</span>
<div class="b" style="left:2938px;top:1306px;width:26px;height:26px;background:#fff;border:2px solid #c6c6c6;"></div>
<span class="t sg" style="left:2970px;top:1305.7px;font-size:24px;color:#6d6d6d;transform:scaleX(0.8885);">Receive as</span>
<div class="b" style="left:2938px;top:1350px;width:26px;height:26px;background:#fff;border:2px solid #c6c6c6;"></div>
<span class="t sg" style="left:2970px;top:1349.7px;font-size:24px;color:#6d6d6d;transform:scaleX(0.9240);">Reset password</span>
<div class="b" style="left:2938px;top:1394px;width:26px;height:26px;background:#fff;border:2px solid #c6c6c6;"></div>
<span class="t sg" style="left:2970px;top:1393.7px;font-size:24px;color:#6d6d6d;transform:scaleX(0.8969);">Send as</span>
<span class="t sg" style="left:2072px;top:1461.7px;font-size:24px;color:#000;transform:scaleX(0.9650);">Properties:</span>
<div class="b" style="left:2202px;top:1510px;width:26px;height:26px;background:#fff;border:2px solid #c6c6c6;"></div>
<span class="t sg" style="left:2234.5px;top:1509.7px;font-size:24px;color:#6d6d6d;transform:scaleX(0.9580);">Read all properties</span>
<div class="b" style="left:2938px;top:1510px;width:26px;height:26px;background:#fff;border:2px solid #c6c6c6;"></div>
<svg style="left:2938.5px;top:1510.5px;stroke:#bebebe" width="25" height="25"><use href="#chk"/></svg>
<span class="t sg" style="left:2970px;top:1509.7px;font-size:24px;color:#6d6d6d;transform:scaleX(0.9779);">Write msDS-ReplAttributeMetaData</span>
</div>
<div class="b" style="left:2026px;top:1521px;width:1700px;height:100px;background:#f0f0f0;"></div>
<div class="b" style="left:2026px;top:1521px;width:1700px;height:3.5px;background:#b0b0b0;"></div>
<div class="b" style="left:3529px;top:1541.5px;width:160px;height:45px;background:#cccccc;border:1px solid #bfbfbf;"></div>
<span class="t sg" style="left:3585px;top:1554.7px;font-size:24px;color:#838383;transform:scaleX(0.8649);">OK</span>
<span class="t mono" style="left:2791.8px;top:1481.6px;font-size:54px;color:transparent;-webkit-text-stroke:1px #b9b9b9;letter-spacing:8px;">initsec.blog.gm7.org</span>
</div>
<div class="c" style="clip-path:inset(760px 273px 337px 2484px);">
<div class="b" style="left:2484px;top:760px;width:913.5px;height:502.5px;background:#f0f0f0;border:2px solid #575757;"></div>
<div class="b" style="left:2486px;top:762px;width:909.5px;height:59.5px;background:#fff;"></div>
<span class="t sg" style="left:2502.5px;top:781.2px;font-size:24px;color:#000;transform:scaleX(0.9839);">Select User, Computer, Service Account, or Group</span>
<svg style="left:0;top:0" width="1" height="1"><path d="M3353.5 780.5L3373 800M3373 780.5L3353.5 800" stroke="#000" stroke-width="1.8" fill="none"/></svg>
<span class="t ar" style="left:2508px;top:847.4px;font-size:22px;color:#000;transform:scaleX(0.9495);">Select this object type:</span>
<div class="b" style="left:2508px;top:878px;width:673.5px;height:46px;background:#f0f0f0;border:1px solid #a0a0a0;box-shadow:inset 0 0 0 2px #fff;"></div>
<span class="t ar" style="left:2514px;top:887.4px;font-size:22px;color:#000;transform:scaleX(0.9398);">User, Group, or Built-in security principal</span>
<div class="b" style="left:3195px;top:879px;width:177.5px;height:44px;background:#e1e1e1;border:1px solid #adadad;"></div>
<span class="t ar" style="left:3214px;top:890.9px;font-size:22px;color:#000;transform:scaleX(0.9498);">Object Types...</span>
<span class="t ar" style="left:2508px;top:939.4px;font-size:22px;color:#000;transform:scaleX(0.9403);">From this location:</span>
<div class="b" style="left:2508px;top:968.5px;width:673.5px;height:45.5px;background:#f0f0f0;border:1px solid #a0a0a0;box-shadow:inset 0 0 0 2px #fff;"></div>
<span class="t ar" style="left:2514px;top:976.4px;font-size:22px;color:#000;transform:scaleX(0.9539);">org.gm7</span>
<div class="b" style="left:3195px;top:969px;width:177.5px;height:44px;background:#e1e1e1;border:1px solid #adadad;"></div>
<span class="t ar" style="left:3230px;top:980.9px;font-size:22px;color:#000;transform:scaleX(0.9510);">Locations...</span>

<span class="t ar" style="left:2508px;top:1039.4px;font-size:22px;color:#000;transform:scaleX(0.9544);"><u>E</u>nter the object name to select (<span style="color:#0066cc;text-decoration:underline">examples</span>):</span>
<div class="b" style="left:2508px;top:1071px;width:673px;height:110px;background:#fff;border:2px solid #fff;border-top:3px solid #6b6b6b;border-left:3px solid #6b6b6b;box-shadow:0 0 0 1px #e3e3e3;"></div>
<span class="t ar" style="left:2514px;top:1079.4px;font-size:22px;color:#000;transform:scaleX(0.9486);text-decoration:underline;text-decoration-thickness:1.5px;">SELF </span>
<span class="t dj bd" style="left:2590.5px;top:1081.5px;font-size:28px;color:#e8142c;">8</span>
<div class="b" style="left:3195px;top:1071px;width:177.5px;height:44px;background:#e1e1e1;border:1px solid #adadad;"></div>
<span class="t ar" style="left:3216px;top:1082.9px;font-size:22px;color:#000;transform:scaleX(0.9699);">Check Names</span>
<span class="t dj bd" style="left:3371.5px;top:1073.5px;font-size:28px;color:#e8142c;">9</span>
<div class="b" style="left:2509px;top:1199px;width:178px;height:44px;background:#e1e1e1;border:1px solid #adadad;"></div>
<span class="t ar" style="left:2542px;top:1210.9px;font-size:22px;color:#000;transform:scaleX(0.9554);">Advanced...</span>
<div class="b" style="left:3063px;top:1199px;width:148px;height:44px;background:#e1e1e1;border:2px solid #0078d7;"></div>
<span class="t ar" style="left:3122px;top:1210.9px;font-size:22px;color:#000;transform:scaleX(0.9435);">OK</span>
<span class="t nt bd" style="left:3165.5px;top:1210.0px;font-size:26.5px;color:#e8142c;transform:scaleX(1.3500);-webkit-text-stroke:1.4px #e8142c;">1</span>
<span class="t dj bd" style="left:3183px;top:1207.8px;font-size:29.5px;color:#e8142c;">0</span>
<div class="b" style="left:3225px;top:1199px;width:147.5px;height:44px;background:#e1e1e1;border:1px solid #adadad;"></div>
<span class="t ar" style="left:3266px;top:1210.9px;font-size:22px;color:#000;transform:scaleX(0.9637);">Cancel</span>
<svg style="left:3376px;top:1241px;" width="16" height="16" viewBox="0 0 16 16"><rect x="12" y="0" width="3" height="3" fill="#b8b8b8"/><rect x="6" y="6" width="3" height="3" fill="#b8b8b8"/><rect x="12" y="6" width="3" height="3" fill="#b8b8b8"/><rect x="0" y="12" width="3" height="3" fill="#b8b8b8"/><rect x="6" y="12" width="3" height="3" fill="#b8b8b8"/><rect x="12" y="12" width="3" height="3" fill="#b8b8b8"/></svg>
</div></body></html>
